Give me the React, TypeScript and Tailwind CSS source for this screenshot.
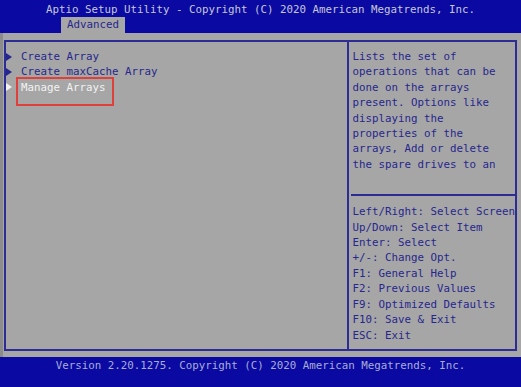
const font = { fontFamily: '"DejaVu Sans Mono", "Liberation Mono", monospace' }

const menu = ['Create Array', 'Create maxCache Array', 'Manage Arrays']

const description = [
  'Lists the set of',
  'operations that can be',
  'done on the arrays',
  'present. Options like',
  'displaying the',
  'properties of the',
  'arrays, Add or delete',
  'the spare drives to an',
]

const keys = [
  'Left/Right: Select Screen',
  'Up/Down: Select Item',
  'Enter: Select',
  '+/-: Change Opt.',
  'F1: General Help',
  'F2: Previous Values',
  'F9: Optimized Defaults',
  'F10: Save & Exit',
  'ESC: Exit',
]

function Arrow({ selected }: { selected: boolean }) {
  return (
    <svg width="6" height="8" viewBox="0 0 6 8" className="shrink-0">
      <path d="M0 0 L6 4 L0 8 Z" fill={selected ? '#f2f2f2' : '#26268e'} />
    </svg>
  )
}

export default function App() {
  return (
    <div
      style={font}
      className="w-[521px] h-[387px] flex flex-col bg-[#a6a6a6] text-[10.8px] leading-[15.4px] overflow-hidden"
    >
      {/* header */}
      <div className="h-[33px] bg-[#0a0aa2] pt-[2px] flex flex-col">
        <div className="h-[15px] leading-[15px] text-center text-[#c6c6d6] whitespace-pre">
          Aptio Setup Utility - Copyright (C) 2020 American Megatrends, Inc.
        </div>
        <div className="ml-[61px] w-[64px] h-[16px] bg-[#a6a6a6] flex items-center justify-center text-[#26268e]">
          Advanced
        </div>
      </div>

      {/* body */}
      <div className="flex-1 pt-[7px] pl-[4px] pr-[4px] border-l-[3px] border-[#8c8c8c] -ml-[0px]">
        <div className="-ml-[3px] h-[311px] border-2 border-[#2c2c94] flex">
          <div className="w-[342px] pt-[7px] flex flex-col">
            {menu.map((item, i) => {
              const selected = i === menu.length - 1
              return (
                <div key={item} className="relative flex items-center h-[15.4px]">
                  <Arrow selected={selected} />
                  <span className={`ml-[9px] whitespace-pre ${selected ? 'text-[#f2f2f2]' : 'text-[#26268e]'}`}>
                    {item}
                  </span>
                  {selected && (
                    <div className="absolute left-[10px] top-[-3px] w-[98px] h-[29px] border-2 border-[#e0403a]" />
                  )}
                </div>
              )
            })}
          </div>

          <div className="flex-1 border-l-2 border-[#2c2c94] pt-[7px] flex flex-col text-[#26268e]">
            <div className="pl-[3px]">
              {description.map(line => (
                <div key={line} className="whitespace-pre">{line}</div>
              ))}
            </div>
            <div className="mt-[22px] ml-[2px] h-[2px] bg-[#2c2c94]" />
            <div className="pl-[3px] mt-[8px]">
              {keys.map(line => (
                <div key={line} className="whitespace-pre">{line}</div>
              ))}
            </div>
          </div>
        </div>
      </div>

      {/* footer */}
      <div className="h-[30px] bg-[#0a0aa2] pt-[1px] text-center text-[#a9acd2] whitespace-pre">
        Version 2.20.1275. Copyright (C) 2020 American Megatrends, Inc.
      </div>
    </div>
  )
}
